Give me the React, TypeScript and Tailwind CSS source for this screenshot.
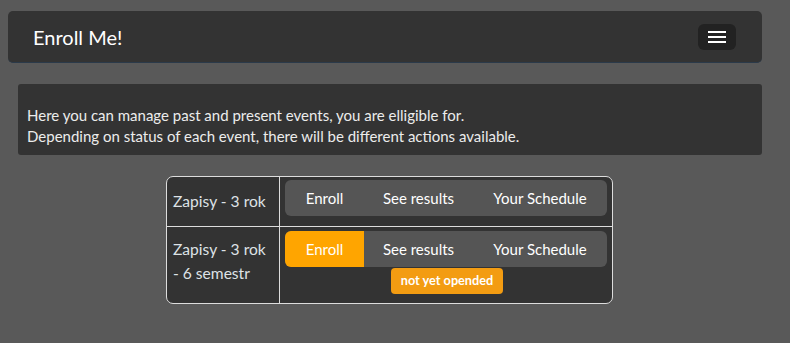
import React from "react";

const groupBtn = "h-[36px] flex items-center justify-center whitespace-nowrap text-[15px] text-white";

function Group({ active }: { active?: boolean }) {
  return (
    <div className="flex rounded-[6px] bg-[#555555] overflow-hidden w-[322px]">
      <div className={`${groupBtn} w-[79px] ${active ? "bg-[#ffa500]" : ""}`}>Enroll</div>
      <div className={`${groupBtn} w-[109px]`}>See results</div>
      <div className={`${groupBtn} flex-1`}>Your Schedule</div>
    </div>
  );
}

export default function App() {
  return (
    <div
      className="w-[790px] h-[343px] bg-[#595959] overflow-hidden"
      style={{ fontFamily: "Lato, 'Noto Sans', sans-serif" }}
    >
      <div className="pt-[11px] pl-[8px] pr-[28px]">
        <div className="h-[52px] bg-[#333333] rounded-[5px] border-b border-[#2b3a4a] flex items-center justify-between pl-[25px] pr-[26px]">
          <span className="text-[20px] text-white">Enroll Me!</span>
          <div className="w-[38px] h-[26px] rounded-[6px] bg-[#222222] flex flex-col items-center justify-center gap-[3px]">
            <div className="w-[18px] h-[2px] bg-white" />
            <div className="w-[18px] h-[2px] bg-white" />
            <div className="w-[18px] h-[2px] bg-white" />
          </div>
        </div>
      </div>
      <div className="pt-[21px] pl-[18px] pr-[28px]">
        <div className="bg-[#333333] rounded-[3px] pt-[21px] pb-[8px] px-[9px] text-[15px] leading-[21px] text-[#ececec]">
          <div>Here you can manage past and present events, you are elligible for.</div>
          <div>Depending on status of each event, there will be different actions available.</div>
        </div>
      </div>
      <div className="flex pt-[21px] pl-[166px]">
        <div className="w-[447px] border border-[#dddddd] rounded-[7px] overflow-hidden bg-[#333333] text-[15.6px]">
          <div className="flex border-b border-[#dddddd] h-[50px]">
            <div className="w-[113px] border-r border-[#dddddd] flex items-center pl-[6px] text-[#dee2e6] whitespace-nowrap">Zapisy - 3 rok</div>
            <div className="flex-1 pl-[5px] pt-[3px]">
              <Group />
            </div>
          </div>
          <div className="flex h-[76px]">
            <div className="w-[113px] border-r border-[#dddddd] pl-[6px] pt-[10px] leading-[24px] text-[#dee2e6]">
              Zapisy - 3 rok
              <br />- 6 semestr
            </div>
            <div className="flex-1 pl-[5px] pt-[4px] flex flex-col">
              <Group active />
              <div className="w-[322px] flex justify-center pl-[2px]">
                <span className="mt-[1px] h-[26px] px-[10px] flex items-center rounded-[4px] bg-[#f39c12] text-white text-[12.7px] font-bold whitespace-nowrap">
                  not yet opended
                </span>
              </div>
            </div>
          </div>
        </div>
      </div>
    </div>
  );
}
